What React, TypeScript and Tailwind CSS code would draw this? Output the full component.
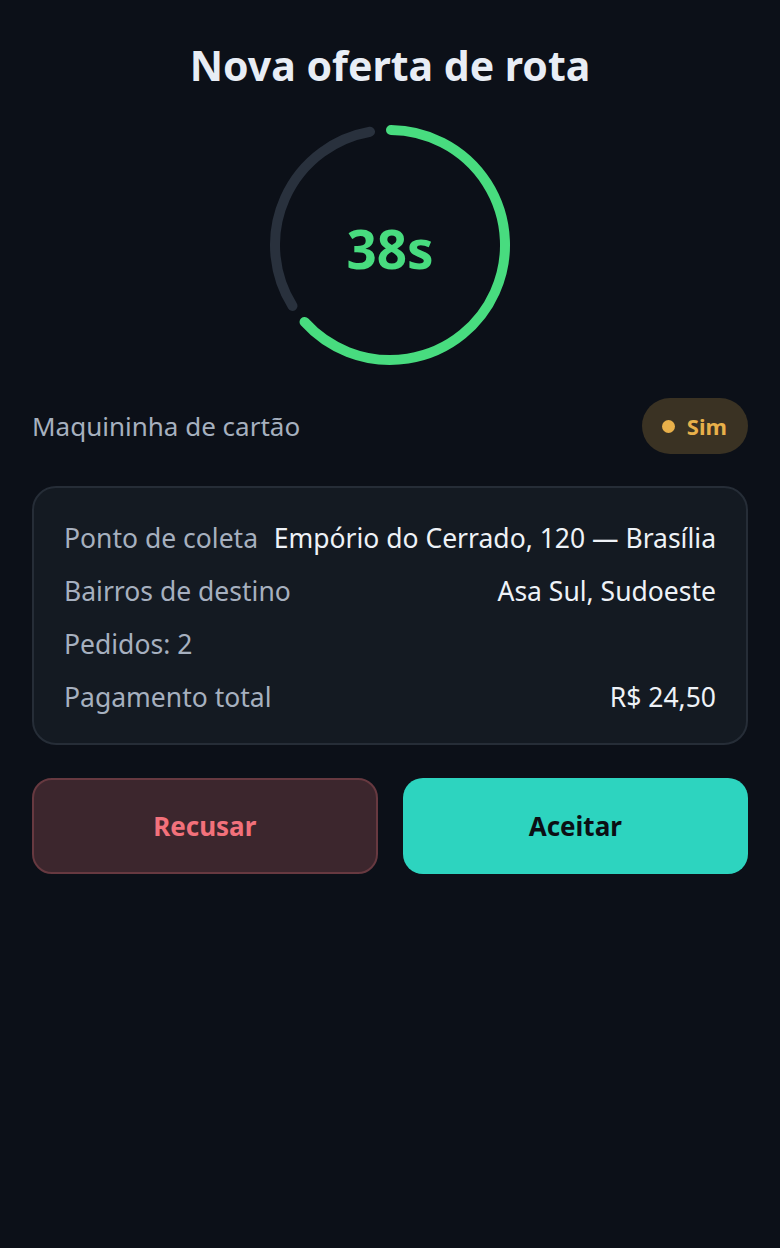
const ringR = 115;

function arcPath(startDeg: number, endDeg: number) {
  const cx = 125;
  const cy = 125;
  const toXY = (deg: number) => {
    const a = ((deg - 90) * Math.PI) / 180;
    return [cx + ringR * Math.cos(a), cy + ringR * Math.sin(a)];
  };
  const [x1, y1] = toXY(startDeg);
  const [x2, y2] = toXY(endDeg);
  const large = endDeg - startDeg > 180 ? 1 : 0;
  return `M ${x1} ${y1} A ${ringR} ${ringR} 0 ${large} 1 ${x2} ${y2}`;
}

function CountdownRing({ seconds, total }: { seconds: number; total: number }) {
  const end = (seconds / total) * 360;
  return (
    <div className="relative h-[250px] w-[250px]">
      <svg width="250" height="250" viewBox="0 0 250 250" aria-hidden>
        <path d={arcPath(end + 10, 350)} fill="none" stroke="#29313d" strokeWidth="10" strokeLinecap="round" />
        <path d={arcPath(0.5, end)} fill="none" stroke="#48dc7f" strokeWidth="10" strokeLinecap="round" />
      </svg>
      <div className="absolute inset-0 flex items-center justify-center pt-[8px] text-[53px] font-bold text-[#48dc7f]">
        {seconds}s
      </div>
    </div>
  );
}

function DetailRow({ label, value }: { label: string; value?: string }) {
  return (
    <div className="flex items-center justify-between gap-3 whitespace-nowrap">
      <span className="text-[#a6b0bf]">{label}</span>
      {value ? <span className="text-[#eef2f7]">{value}</span> : null}
    </div>
  );
}

export default function App() {
  return (
    <div
      className="min-h-[1248px] bg-[#0c1018] px-8 pt-[38px]"
      style={{ fontFamily: '"Noto Sans", "Open Sans", sans-serif' }}
    >
      <h1 className="text-center text-[41px] font-bold leading-[54px] text-[#e8edf5]">
        Nova oferta de rota
      </h1>

      <div className="mt-[28px] flex justify-center">
        <CountdownRing seconds={38} total={60} />
      </div>

      <div className="mt-[28px] flex items-center justify-between">
        <span className="text-[26px] text-[#a6b0bf]">Maquininha de cartão</span>
        <span className="flex h-[56px] items-center gap-[12px] rounded-full bg-[#3a3223] pl-[20px] pr-[21px] text-[22px] font-bold text-[#e8b04a]">
          <span className="h-[13px] w-[13px] rounded-full bg-[#e8b04a]" />
          Sim
        </span>
      </div>

      <section className="mt-[32px] flex flex-col gap-[17px] rounded-[24px] border-2 border-[#262d37] bg-[#141a22] px-[30px] pt-[32px] pb-[28px] text-[26.5px] leading-[36px]">
        <DetailRow label="Ponto de coleta" value="Empório do Cerrado, 120 — Brasília" />
        <DetailRow label="Bairros de destino" value="Asa Sul, Sudoeste" />
        <DetailRow label="Pedidos: 2" />
        <DetailRow label="Pagamento total" value="R$ 24,50" />
      </section>

      <div className="mt-[33px] grid grid-cols-2 gap-[25px]">
        <button className="h-[96px] rounded-[20px] border-2 border-[#673940] bg-[#3c262d] text-[26px] font-bold text-[#f2717b]">
          Recusar
        </button>
        <button className="h-[96px] rounded-[20px] bg-[#2dd4bf] text-[26px] font-bold text-[#0b0f14]">
          Aceitar
        </button>
      </div>
    </div>
  );
}
